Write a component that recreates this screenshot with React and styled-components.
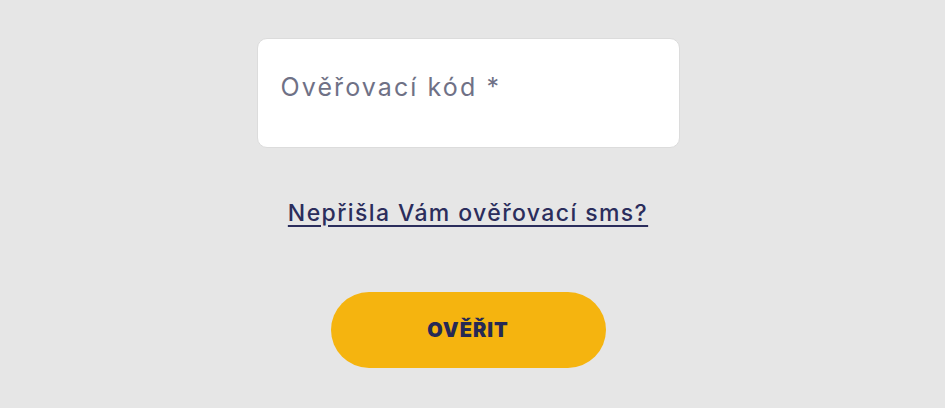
import React from "react";
import styled, { createGlobalStyle } from "styled-components";

const Global = createGlobalStyle`
  html, body { margin: 0; padding: 0; background: #e6e6e6; }
  body { font-family: Inter, "Noto Sans", sans-serif; }
`;

const Page = styled.main`
  width: 945px;
  height: 408px;
  display: flex;
  flex-direction: column;
  align-items: center;
  padding-top: 38px;
  box-sizing: border-box;
`;

const Field = styled.label`
  width: 423px;
  height: 110px;
  box-sizing: border-box;
  margin-left: -9px;
  background: #ffffff;
  border: 1px solid #dcdcdc;
  border-radius: 10px;
  display: flex;
  align-items: center;
  padding: 0 21px 12px;
`;

const Input = styled.input`
  border: none;
  outline: none;
  background: transparent;
  width: 100%;
  font-family: inherit;
  font-size: 25px;
  letter-spacing: 2.1px;
  color: #2a2d5a;
  &::placeholder { color: #6f7186; }
`;

const Link = styled.a`
  margin-top: 51px;
  margin-left: -9px;
  font-size: 23px;
  font-weight: 500;
  letter-spacing: 1.4px;
  color: #2b2d5c;
  text-decoration: underline;
  text-underline-offset: 4px;
  text-decoration-thickness: 1.5px;
  cursor: pointer;
`;

const Button = styled.button`
  margin-top: 65px;
  margin-left: -9px;
  width: 275px;
  height: 76px;
  border: none;
  border-radius: 38px;
  background: #f5b40f;
  color: #262955;
  font-family: inherit;
  font-size: 20px;
  font-weight: 900;
  letter-spacing: 1px;
  cursor: pointer;
`;

export default function App() {
  return (
    <>
      <Global />
      <Page>
        <Field>
          <Input placeholder="Ověřovací kód *" />
        </Field>
        <Link>Nepřišla Vám ověřovací sms?</Link>
        <Button>OVĚŘIT</Button>
      </Page>
    </>
  );
}
